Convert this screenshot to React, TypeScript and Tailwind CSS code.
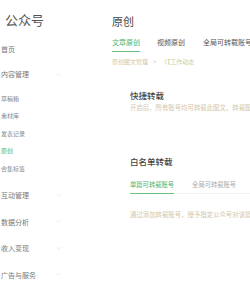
import { ChevronDown, ChevronUp } from 'lucide-react';

const font = { fontFamily: '"Noto Sans CJK SC", "Noto Sans", sans-serif' };

function NavGroup({ label, open }: { label: string; open?: boolean }) {
  return (
    <div className="flex items-center h-[27px] pl-px text-[7px] text-[#777]">
      <span className="w-[54px]">{label}</span>
      {open ? (
        <ChevronUp className="w-[7px] h-[7px] text-[#ccc]" strokeWidth={1.5} />
      ) : (
        <ChevronDown className="w-[7px] h-[7px] text-[#ccc]" strokeWidth={1.5} />
      )}
    </div>
  );
}

function SubItem({ label, active }: { label: string; active?: boolean }) {
  return (
    <div
      className={`flex items-center h-[18px] pl-px text-[6px] ${
        active ? 'text-[#4cb26a]' : 'text-[#888]'
      }`}
    >
      {label}
    </div>
  );
}

export default function App() {
  return (
    <div className="flex w-[250px] h-[288px] bg-white overflow-hidden" style={font}>
      {/* Sidebar */}
      <div className="w-[100px] shrink-0 flex flex-col">
        <div className="h-[38px] pl-[5px] pt-[11px] text-[13px] leading-[18px] text-[#555]">公众号</div>
        <div className="flex items-center h-[24px] pl-px text-[7px] text-[#777]">首页</div>
        <NavGroup label="内容管理" open />
        <div className="h-[2px]" />
        <SubItem label="草稿箱" />
        <SubItem label="素材库" />
        <SubItem label="发表记录" />
        <SubItem label="原创" active />
        <SubItem label="合集标签" />
        <div className="h-[5px]" />
        <NavGroup label="互动管理" />
        <NavGroup label="数据分析" />
        <NavGroup label="收入变现" />
        <NavGroup label="广告与服务" />
      </div>

      {/* Main */}
      <div className="flex-1 min-w-0 pl-[12px] pt-[13px] overflow-hidden">
        <div className="text-[11px] leading-[16px] text-[#444]">原创</div>

        <div className="flex mt-[8px] text-[7px] whitespace-nowrap">
          <div className="pb-[3px] border-b-[1.5px] border-[#6cc07f] text-[#4cb26a]">文章原创</div>
          <div className="ml-[17px] text-[#555]">视频原创</div>
          <div className="ml-[18px] text-[#555]">全局可转载账号</div>
        </div>

        <div className="flex items-center mt-[5px] text-[6px] text-[#d3c6a8] whitespace-nowrap">
          <span>原创图文管理</span>
          <span className="ml-[5px]">&gt;</span>
          <span className="ml-[5px] text-[#c9cf9f]">《【工作动态</span>
        </div>

        <div className="pl-[18px] mt-[23px]">
          <div className="text-[8.5px] leading-[12px] text-[#444] font-medium">快捷转载</div>
          <div className="mt-[2px] text-[6.4px] text-[#d3c6a8] whitespace-nowrap">
            开启后，所有账号均可转载此图文，转载图
          </div>

          <div className="mt-[43px] text-[8.5px] leading-[12px] text-[#444] font-medium">白名单转载</div>

          <div className="flex mt-[13px] text-[6.3px] whitespace-nowrap border-b border-[#f2f2f2]">
            <div className="pb-[3px] border-b-[1.5px] border-[#6cc07f] -mb-px text-[#4cb26a]">单篇可转载账号</div>
            <div className="ml-[18px] text-[#aaa]">全局可转载账号</div>
          </div>

          <div className="mt-[16px] text-[6.4px] text-[#d3c6a8] whitespace-nowrap">
            通过添加转载账号，授予指定公众号对该篇
          </div>
        </div>
      </div>
    </div>
  );
}
